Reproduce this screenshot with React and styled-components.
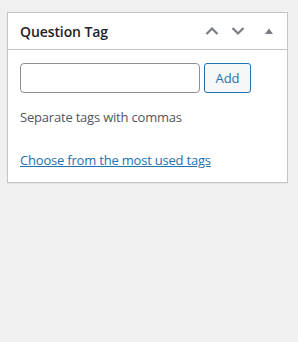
import React from 'react';
import styled, { createGlobalStyle } from 'styled-components';

const GlobalStyle = createGlobalStyle`
  html, body { margin: 0; padding: 0; background: #f0f0f1; }
  body { font-family: "Open Sans", "Liberation Sans", sans-serif; color: #1d2327; }
`;

const Page = styled.div`
  padding: 12px 10px 0 7px;
  width: 298px;
  height: 342px;
  box-sizing: border-box;
`;

const Box = styled.div`
  width: 281px;
  box-sizing: border-box;
  background: #fff;
  border: 1px solid #c3c4c7;
  box-shadow: 0 1px 1px rgba(0, 0, 0, 0.04);
`;

const Header = styled.div`
  display: flex;
  align-items: center;
  height: 36px;
  border-bottom: 1px solid #c3c4c7;
  padding: 0 0 0 12px;
`;

const Title = styled.h2`
  flex: 1;
  margin: 0;
  font-size: 14px;
  font-weight: 600;
  color: #1d2327;
  letter-spacing: -0.1px;
`;

const Actions = styled.div`
  display: flex;
  align-items: center;
`;

const IconButton = styled.button`
  width: ${({ w }) => w || 26}px;
  height: 36px;
  padding: 0;
  border: 0;
  background: none;
  display: flex;
  align-items: center;
  justify-content: center;
  color: #787c82;
`;

const Inside = styled.div`
  padding: 13px 12px 13px 12px;
`;

const Row = styled.div`
  display: flex;
  gap: 4px;
`;

const Input = styled.input`
  width: 180px;
  height: 30px;
  box-sizing: border-box;
  border: 1px solid #8c8f94;
  border-radius: 4px;
  font-size: 14px;
`;

const Button = styled.button`
  width: 47px;
  height: 30px;
  box-sizing: border-box;
  border: 1px solid #2271b1;
  border-radius: 3px;
  background: #f6f7f7;
  color: #2271b1;
  font-family: inherit;
  font-size: 13px;
`;

const Howto = styled.p`
  margin: 15px 0 0;
  font-size: 13px;
  color: #50575e;
  letter-spacing: -0.2px;
`;

const Link = styled.a`
  display: block;
  margin-top: 25px;
  font-size: 13px;
  color: #2271b1;
  text-decoration: underline;
  letter-spacing: -0.2px;
`;

const Chevron = ({ up }) => (
  <svg width="14" height="10" viewBox="0 0 14 10" fill="none" stroke="currentColor" strokeWidth="2.2">
    {up ? <path d="M1.5 8 L7 2.5 L12.5 8" /> : <path d="M1.5 2 L7 7.5 L12.5 2" />}
  </svg>
);

export default function App() {
  return (
    <>
      <GlobalStyle />
      <Page>
        <Box>
          <Header>
            <Title>Question Tag</Title>
            <Actions>
              <IconButton><Chevron up /></IconButton>
              <IconButton><Chevron /></IconButton>
              <IconButton w={36}>
                <svg width="10" height="8" viewBox="0 0 10 8"><path d="M1 7 L5 1.5 L9 7 Z" fill="currentColor" /></svg>
              </IconButton>
            </Actions>
          </Header>
          <Inside>
            <Row>
              <Input type="text" />
              <Button>Add</Button>
            </Row>
            <Howto>Separate tags with commas</Howto>
            <Link href="#">Choose from the most used tags</Link>
          </Inside>
        </Box>
      </Page>
    </>
  );
}
